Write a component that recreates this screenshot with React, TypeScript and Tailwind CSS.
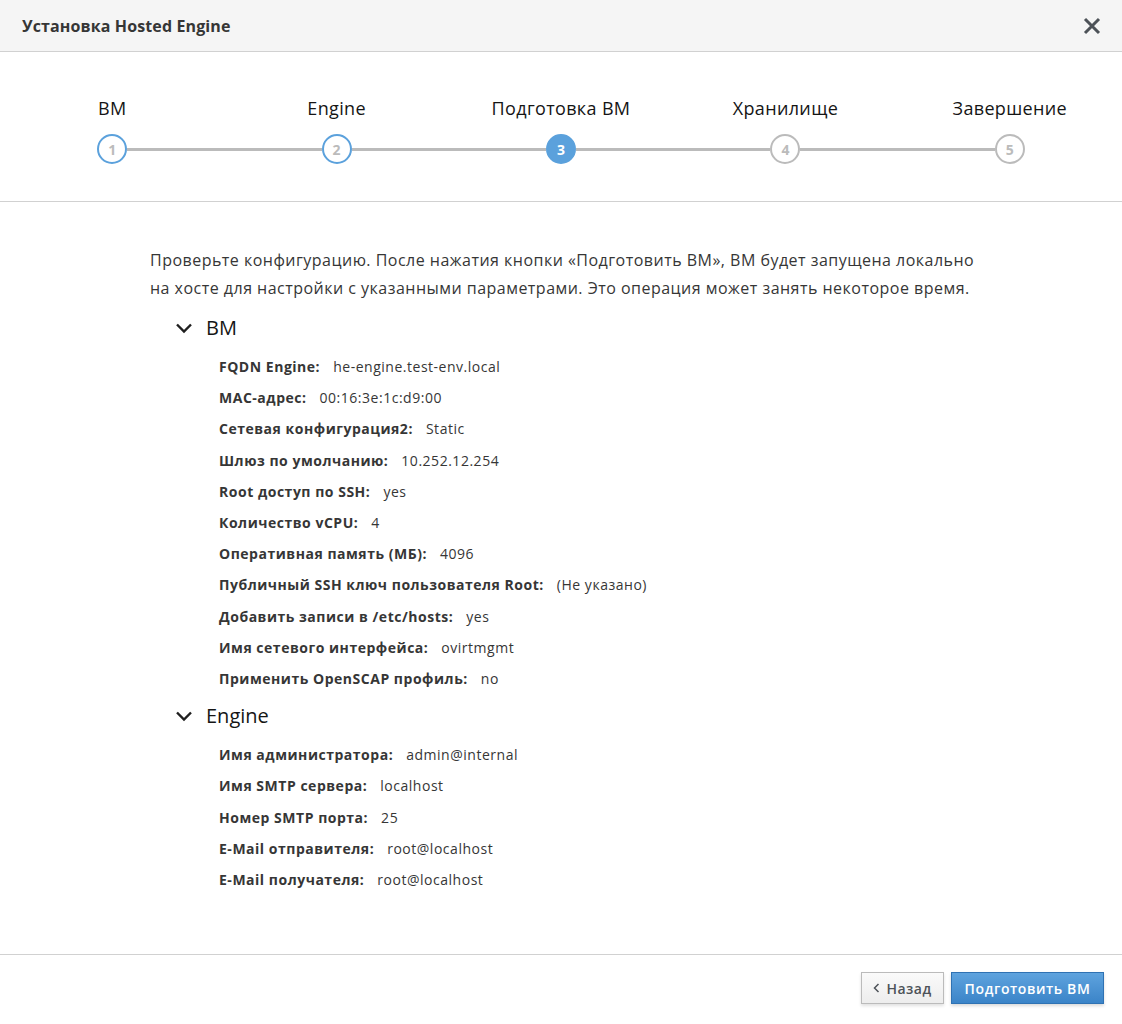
import React from "react";

const steps = [
  { n: 1, label: "ВМ", state: "done" },
  { n: 2, label: "Engine", state: "done" },
  { n: 3, label: "Подготовка ВМ", state: "active" },
  { n: 4, label: "Хранилище", state: "todo" },
  { n: 5, label: "Завершение", state: "todo" },
];

const vmRows: [string, string][] = [
  ["FQDN Engine:", "he-engine.test-env.local"],
  ["MAC-адрес:", "00:16:3e:1c:d9:00"],
  ["Сетевая конфигурация2:", "Static"],
  ["Шлюз по умолчанию:", "10.252.12.254"],
  ["Root доступ по SSH:", "yes"],
  ["Количество vCPU:", "4"],
  ["Оперативная память (МБ):", "4096"],
  ["Публичный SSH ключ пользователя Root:", "(Не указано)"],
  ["Добавить записи в /etc/hosts:", "yes"],
  ["Имя сетевого интерфейса:", "ovirtmgmt"],
  ["Применить OpenSCAP профиль:", "no"],
];

const engineRows: [string, string][] = [
  ["Имя администратора:", "admin@internal"],
  ["Имя SMTP сервера:", "localhost"],
  ["Номер SMTP порта:", "25"],
  ["E-Mail отправителя:", "root@localhost"],
  ["E-Mail получателя:", "root@localhost"],
];

function Chevron() {
  return (
    <svg width="18" height="12" viewBox="0 0 18 12" className="shrink-0">
      <path d="M2 2.5 L9 9.5 L16 2.5" fill="none" stroke="#1f1f1f" strokeWidth="2.4" />
    </svg>
  );
}

function Section({ title, rows }: { title: string; rows: [string, string][] }) {
  return (
    <div>
      <div className="flex items-center h-[28px] pl-[25px]">
        <Chevron />
        <span className="ml-[13px] text-[20px] text-[#151515]">{title}</span>
      </div>
      <div className="mt-[9px] pl-[69px]">
        {rows.map(([k, v]) => (
          <div key={k} className="flex items-center h-[31.2px] text-[14px] tracking-[0.52px]">
            <span className="font-bold text-[#363636]">{k}</span>
            <span className="ml-[13px] text-[#363636]">{v}</span>
          </div>
        ))}
      </div>
    </div>
  );
}

function Step({ s, first, last }: { s: (typeof steps)[number]; first: boolean; last: boolean }) {
  const circle =
    s.state === "active"
      ? "bg-[#5ba1dc] border-[#5ba1dc] text-white"
      : s.state === "done"
      ? "bg-white border-[#5ba1dc] text-[#bbbbbb]"
      : "bg-white border-[#bbbbbb] text-[#bbbbbb]";
  return (
    <div className="flex flex-col items-center">
      <div className="h-[24px] leading-[24px] text-[18px] tracking-[0.35px] text-[#151515] whitespace-nowrap">
        {s.label}
      </div>
      <div className="mt-[14px] flex items-center w-full">
        <div className={`flex-1 h-[3px] ${first ? "bg-transparent" : "bg-[#bbbbbb]"}`} />
        <div
          className={`w-[30px] h-[30px] rounded-full border-2 flex items-center justify-center text-[14px] font-bold ${circle}`}
        >
          {s.n}
        </div>
        <div className={`flex-1 h-[3px] ${last ? "bg-transparent" : "bg-[#bbbbbb]"}`} />
      </div>
    </div>
  );
}

export default function App() {
  return (
    <div
      className="w-[1122px] h-[1024px] flex flex-col bg-white text-[#363636]"
      style={{ fontFamily: '"Open Sans", "Noto Sans", sans-serif' }}
    >
      <div className="h-[52px] shrink-0 bg-[#f5f5f5] border-b border-[#d1d1d1] flex items-center justify-between pl-[22px] pr-[21px]">
        <span className="text-[16px] font-bold tracking-[0.12px] text-[#363636]">Установка Hosted Engine</span>
        <svg width="18" height="18" viewBox="0 0 18 18">
          <path d="M2 2 L16 16 M16 2 L2 16" stroke="#4d5258" strokeWidth="3" />
        </svg>
      </div>

      <div className="h-[150px] shrink-0 border-b border-[#d1d1d1] pt-[44px] grid grid-cols-5">
        {steps.map((s, i) => (
          <Step key={s.n} s={s} first={i === 0} last={i === steps.length - 1} />
        ))}
      </div>

      <div className="flex-1 pt-[44px] pl-[150px]">
        <p className="w-[880px] text-[16px] leading-[28px] tracking-[0.48px] text-[#363636]">
          Проверьте конфигурацию. После нажатия кнопки «Подготовить ВМ», ВМ будет запущена локально
          <br />
          на хосте для настройки с указанными параметрами. Это операция может занять некоторое время.
        </p>
        <div className="mt-[12px]">
          <Section title="ВМ" rows={vmRows} />
        </div>
        <div className="mt-[8px]">
          <Section title="Engine" rows={engineRows} />
        </div>
      </div>

      <div className="h-[70px] shrink-0 border-t border-[#d1d1d1] pt-[17px] pr-[18px] flex justify-end items-start gap-[7px]">
        <button className="h-[32px] w-[83px] flex items-center justify-center gap-[6px] border border-[#bbbbbb] bg-gradient-to-b from-[#fafafa] to-[#ededed] text-[14px] font-semibold tracking-[0.5px] text-[#4d5258] shadow-[0_2px_3px_rgba(0,0,0,0.12)]">
          <svg width="7" height="10" viewBox="0 0 7 10">
            <path d="M5.5 1 L1.5 5 L5.5 9" fill="none" stroke="#4d5258" strokeWidth="1.5" />
          </svg>
          Назад
        </button>
        <button className="h-[32px] w-[153px] flex items-center justify-center border border-[#2f72b3] bg-gradient-to-b from-[#5ea3de] to-[#3b84c8] text-[14px] font-semibold tracking-[0.6px] text-white shadow-[0_2px_3px_rgba(0,0,0,0.15)]">
          Подготовить ВМ
        </button>
      </div>
    </div>
  );
}
